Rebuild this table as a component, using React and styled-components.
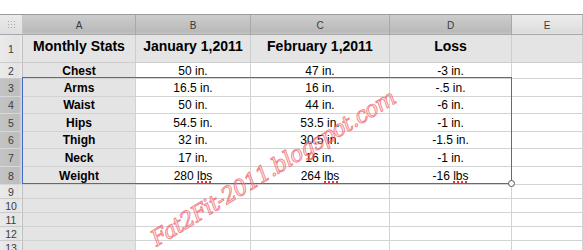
import React from "react";
import styled, { createGlobalStyle, css } from "styled-components";

const Global = createGlobalStyle`
  html, body { margin: 0; padding: 0; background: #ffffff; }
  body { width: 583px; height: 250px; overflow: hidden; font-family: "Liberation Sans", Arial, sans-serif; }
`;

const Page = styled.div`
  position: relative;
  width: 583px;
  height: 250px;
  padding-top: 14px;
  box-sizing: border-box;
  overflow: hidden;
`;

const Sheet = styled.div`
  display: grid;
  grid-template-columns: 23px 113px 115px 139px 122px 71px;
  grid-template-rows: 20px 28px 16px 18px 17px 18px 17px 18px 18px 14px 14px 14px 14px 14px;
  border-top: 1px solid #9c9c9c;
`;

const CellBase = styled.div`
  box-sizing: border-box;
  border-right: 1px solid #d0d0d0;
  border-bottom: 1px solid #d0d0d0;
  display: flex;
  justify-content: center;
  align-items: center;
  overflow: hidden;
  white-space: nowrap;
`;

const Corner = styled(CellBase)`
  background: linear-gradient(#eaeaea, #dedede);
  border-right-color: #c4c4c4;
  border-bottom-color: #a8a8a8;
`;

const ColHead = styled(CellBase)`
  font-size: 10px;
  color: #3a3a3a;
  padding-top: 1px;
  border-bottom-color: #a8a8a8;
  ${(p) =>
    p.$selected
      ? css`
          background: linear-gradient(#cdcdcd 0%, #c3c3c3 45%, #b9b9b9 90%, #c8c8c8 100%);
          border-right-color: #a9a9a9;
        `
      : css`
          background: linear-gradient(#ececec 0%, #e6e6e6 45%, #dcdcdc 90%, #e4e4e4 100%);
          border-right-color: #bdbdbd;
        `}
`;

const RowHead = styled(CellBase)`
  font-size: 10.5px;
  color: #3c3c3c;
  border-right-color: #c0c0c0;
  ${(p) =>
    p.$selected
      ? css`
          background: linear-gradient(90deg, #c3c3c3 0%, #bdbdbd 85%, #d6d6d6 100%);
          border-bottom-color: #d8d8d8;
        `
      : css`
          background: linear-gradient(90deg, #eaeaea 0%, #e3e3e3 85%, #ececec 100%);
          border-bottom-color: #cbcbcb;
        `}
`;

const TitleCell = styled(CellBase)`
  background: #e4e4e4;
  border-color: #cdcdcd;
  align-items: flex-start;
  padding-top: 3px;
  font-size: 14px;
  line-height: 16px;
  font-weight: bold;
  color: #000;
`;

const LabelCell = styled(CellBase)`
  background: #e4e4e4;
  border-color: #d2d2d2;
  font-size: 12px;
  font-weight: bold;
  color: #000;
`;

const DataCell = styled(CellBase)`
  background: #ffffff;
  border-color: #d3d3d3;
  font-size: 12px;
  color: #000;
`;

const Misspelt = styled.span`
  text-decoration: underline dotted #e23a3a;
  text-decoration-thickness: 1.5px;
  text-underline-offset: 2px;
`;

const Selection = styled.div`
  position: absolute;
  left: 22px;
  top: 77px;
  width: 490px;
  height: 107px;
  box-sizing: border-box;
  border: 1px solid #3d6dc4;
  pointer-events: none;
`;

const Handle = styled.div`
  position: absolute;
  right: -4px;
  bottom: -4px;
  width: 5px;
  height: 5px;
  border-radius: 50%;
  background: #ffffff;
  border: 1px solid #555;
`;

const Watermark = styled.div`
  position: absolute;
  left: 273px;
  top: 168px;
  transform: translate(-50%, -50%) rotate(-31deg);
  font-family: "DejaVu Serif", "Liberation Serif", serif;
  font-style: italic;
  font-size: 22px;
  letter-spacing: -0.8px;
  white-space: nowrap;
  color: rgba(255, 170, 170, 0.25);
  -webkit-text-stroke: 0.9px rgba(238, 90, 100, 0.75);
  pointer-events: none;
`;

const Dots = () => (
  <svg width="9" height="9" viewBox="0 0 9 9">
    {[1, 4, 7].map((y) =>
      [1, 4, 7].map((x) => <rect key={`${x}-${y}`} x={x} y={y} width="1" height="1" fill="#a8a8a8" />)
    )}
  </svg>
);

const columns = ["A", "B", "C", "D", "E"];
const titles = ["Monthly Stats", "January 1,2011", "February 1,2011", "Loss", ""];
const rows = [
  ["Chest", "50 in.", "47 in.", "-3 in."],
  ["Arms", "16.5 in.", "16 in.", "-.5 in."],
  ["Waist", "50 in.", "44 in.", "-6 in."],
  ["Hips", "54.5 in.", "53.5 in.", "-1 in."],
  ["Thigh", "32 in.", "30.5 in.", "-1.5 in."],
  ["Neck", "17 in.", "16 in.", "-1 in."],
  ["Weight", "280 lbs", "264 lbs", "-16 lbs"],
];

const renderValue = (v) => {
  if (v.endsWith(" lbs")) {
    return (
      <span>
        {v.slice(0, -3)}
        <Misspelt>lbs</Misspelt>
      </span>
    );
  }
  return v;
};

export default function App() {
  return (
    <>
      <Global />
      <Page>
        <Sheet>
          <Corner>
            <Dots />
          </Corner>
          {columns.map((c) => (
            <ColHead key={c} $selected={c !== "E"}>
              {c}
            </ColHead>
          ))}

          <RowHead>1</RowHead>
          {titles.map((t, i) => (
            <TitleCell key={i}>{t}</TitleCell>
          ))}

          {rows.map((r, i) => {
            const n = i + 2;
            return (
              <React.Fragment key={n}>
                <RowHead $selected={n >= 3 && n <= 8}>{n}</RowHead>
                <LabelCell>{r[0]}</LabelCell>
                <DataCell>{renderValue(r[1])}</DataCell>
                <DataCell>{renderValue(r[2])}</DataCell>
                <DataCell>{renderValue(r[3])}</DataCell>
                <DataCell />
              </React.Fragment>
            );
          })}

          {[9, 10, 11, 12, 13].map((n) => (
            <React.Fragment key={n}>
              <RowHead>{n}</RowHead>
              <LabelCell />
              <DataCell />
              <DataCell />
              <DataCell />
              <DataCell />
            </React.Fragment>
          ))}
        </Sheet>
        <Selection>
          <Handle />
        </Selection>
        <Watermark>Fat2Fit-2011.blogspot.com</Watermark>
      </Page>
    </>
  );
}
